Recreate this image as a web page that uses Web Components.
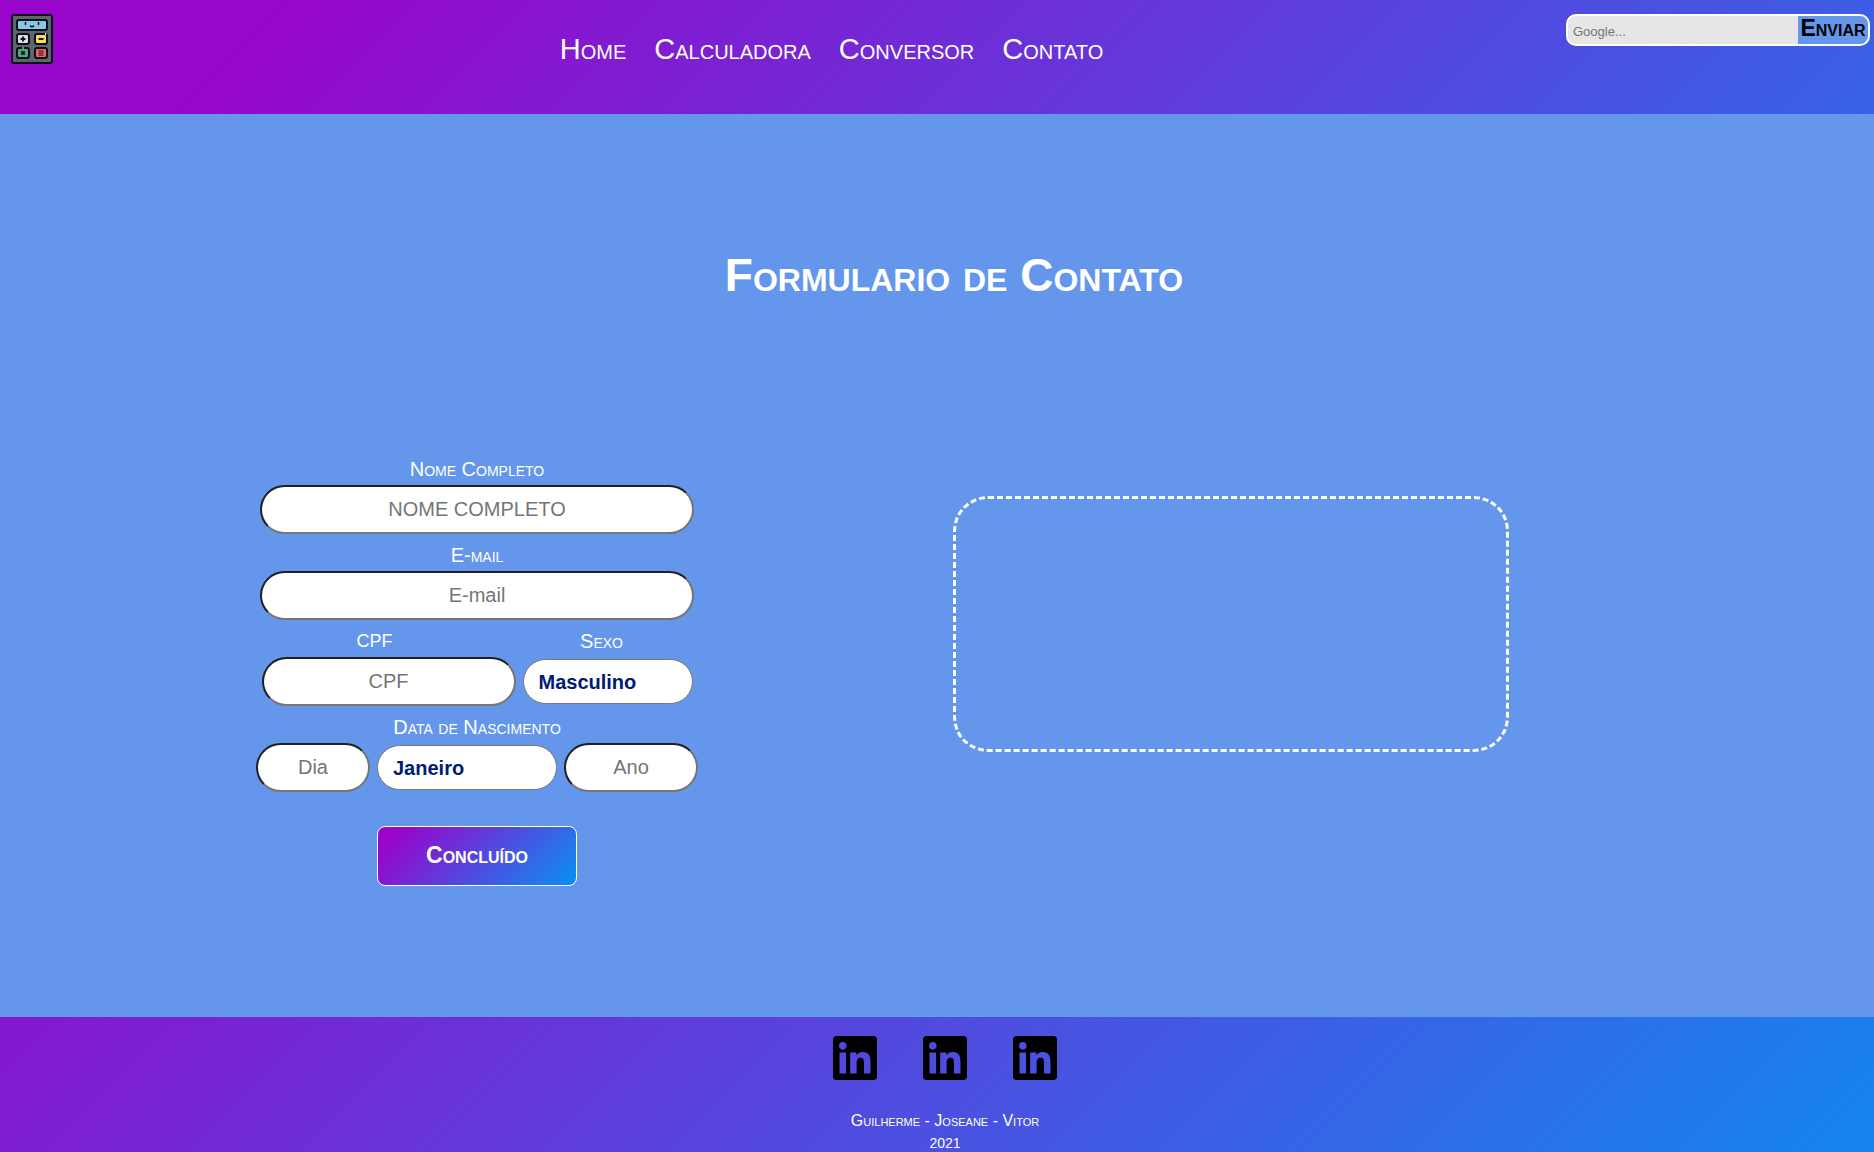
<!DOCTYPE html>
<html lang="pt-br">
<head>
<meta charset="utf-8">
<title>Formulario de Contato</title>
<style>
*{box-sizing:border-box}
body{margin:0;font-family:"Liberation Sans",Arial,sans-serif;font-variant:small-caps;color:#fff;background:#6497ec;--violet:#9805cb;--blue:#0891f3}
</style>
</head>
<body>
<contact-page></contact-page>
<script>
const define = (name, html) => customElements.define(name, class extends HTMLElement {
  constructor() {
    super();
    const root = this.attachShadow({ mode: 'open' });
    root.innerHTML = '<style>*{box-sizing:border-box}</style>' + html(this);
  }
});

define('calc-logo', () => `
<style>:host{display:block;width:42px;height:50px}svg{display:block;width:100%;height:100%}</style>
<svg viewBox="0 0 42 50" role="img" aria-label="Calculadora">
<rect x="1" y="1" width="40" height="48" rx="2" fill="#596773" stroke="#101014" stroke-width="2"/>
<g stroke="#101014" stroke-width="2">
<rect x="6" y="6" width="30" height="10" rx="2" fill="#80cbea"/>
<rect x="6" y="20" width="12" height="10" rx="2" fill="#dcdce0"/>
<rect x="24" y="20" width="12" height="10" rx="2" fill="#fbdc55"/>
<rect x="6" y="34" width="12" height="10" rx="2" fill="#48ad7c"/>
<rect x="24" y="34" width="12" height="10" rx="2" fill="#f2646b"/>
</g>
<g fill="none" stroke="#101014" stroke-width="1.800">
<path d="M12 22.500v5M9.500 25h5M27.500 25h5M10.300 37.300l3.400 3.400M13.700 37.300l-3.400 3.400"/>
<path d="M27.500 37h5M27.500 39h5M27.500 41h5" stroke-width="1.200"/>
<path d="M14.500 8v3M27.500 8v3M19 11.500q2 2.500 4 0" stroke-width="1.500"/>
</g>
<path d="M12.500 12h3M26 12h3" stroke="#e794ad" stroke-width="1.800"/>
<path d="M34.500 19v2M12 33v2" stroke="#fff3b0" stroke-width="1"/>
</svg>`);

define('site-search', () => `
<style>
:host{display:block;width:304px}
form{display:flex;height:32px;border:2px solid #fff;border-radius:10px;overflow:hidden;background:#e6e6e6}
input{flex:1;min-width:0;border:0;outline:0;padding:2px 5px 0;background:#e6e6e6;font:13px "Liberation Sans",Arial,sans-serif}
input::placeholder{color:#757575}
button{width:70px;border:0;padding:0 0 4px;background:#6497ec;color:#000;font:bold small-caps 23px/24px "Liberation Sans",Arial,sans-serif;white-space:nowrap}
</style>
<form><input type="search" aria-label="Pesquisar" placeholder="Google..."><button type="button">Enviar</button></form>`);

define('site-header', () => `
<style>
:host{display:flex;justify-content:space-between;height:114px;padding:14px 4px 0 11px;background:linear-gradient(135deg,var(--violet) 14%,var(--blue) 142%)}
nav{display:flex;gap:28px;padding:20px 0 0 44px;font-size:29px;line-height:30px}
a{color:inherit;text-decoration:none}
</style>
<calc-logo></calc-logo>
<nav><a href="#">Home</a><a href="#">Calculadora</a><a href="#">Conversor</a><a href="#">Contato</a></nav>
<site-search></site-search>`);

define('form-field', el => {
  const label = el.getAttribute('label'), hint = el.getAttribute('hint'), option = el.getAttribute('option');
  const aria = label ? '' : `aria-label="${el.getAttribute('name')}"`;
  return `
<style>
:host{display:flex;flex-direction:column;align-items:center}
label{font-size:20px;line-height:20px;padding:0 var(--label-end,0) 6px 0}
:host([acronym]) label{font-size:18px}
.box{display:flex;align-items:center;width:100%;height:49px}
input,select{width:100%;font:20px "Liberation Sans",Arial,sans-serif;background:#fff;border-radius:25px;margin:0}
input{height:49px;border:2px solid;border-color:#202020 #767676 #767676 #202020;padding:0 10px;text-align:center}
input::placeholder{color:#757575}
select{appearance:none;height:45px;border:1px solid #767676;padding:0 15px;color:#001c72;font-weight:bold}
</style>
${label ? `<label for="control">${label}</label>` : ''}
<div class="box">${option ? `<select id="control" ${aria}><option>${option}</option></select>` : `<input id="control" ${aria} placeholder="${hint}">`}</div>`;
});

define('contact-form', () => `
<style>
:host{display:block;width:442px}
form{display:flex;flex-direction:column;align-items:center;gap:11px}
.full{width:434px}
.row{display:flex;justify-content:center;gap:7px}
.cpf{width:254px;--label-end:28px}.sexo{width:170px;--label-end:12px}
fieldset{border:0;margin:0;padding:0;min-width:0}
legend{padding:0 0 6px;margin:0 auto;font-size:20px;line-height:20px}
.dia{width:114px}.mes{width:180px}.ano{width:134px}
button{width:200px;height:60px;margin-top:23px;padding:0 0 2px;border:1px solid #fff;border-radius:8px;color:#fff;background:linear-gradient(135deg,var(--violet) 10%,var(--blue) 100%);font:bold small-caps 23px "Liberation Sans",Arial,sans-serif}
</style>
<form>
<form-field class="full" label="Nome Completo" hint="NOME COMPLETO"></form-field>
<form-field class="full" label="E-mail" hint="E-mail"></form-field>
<div class="row"><form-field class="cpf" acronym label="CPF" hint="CPF"></form-field><form-field class="sexo" label="Sexo" option="Masculino"></form-field></div>
<fieldset><legend>Data de Nascimento</legend><div class="row"><form-field class="dia" name="Dia" hint="Dia"></form-field><form-field class="mes" name="Mês" option="Janeiro"></form-field><form-field class="ano" name="Ano" hint="Ano"></form-field></div></fieldset>
<button type="button">Concluído</button>
</form>`);

define('message-panel', () => `
<style>:host{display:block;width:556px;height:256px;border:3px dashed #fff;border-radius:35px}</style><slot></slot>`);

define('linkedin-link', el => `
<style>:host{display:block}a{display:block}svg{display:block;width:44px;height:44px}</style>
<a href="#" aria-label="LinkedIn de ${el.getAttribute('person')}"><svg viewBox="0 0 24 24"><path d="M20.447 20.452h-3.554v-5.569c0-1.328-.027-3.037-1.852-3.037-1.853 0-2.136 1.445-2.136 2.939v5.667H9.351V9h3.414v1.561h.046c.477-.9 1.637-1.850 3.370-1.850 3.601 0 4.267 2.370 4.267 5.455v6.286zM5.337 7.433a2.062 2.062 0 0 1-2.063-2.065 2.064 2.064 0 1 1 2.063 2.065zm1.782 13.019H3.555V9h3.564v11.452zM22.225 0H1.771C.792 0 0 .774 0 1.729v20.542C0 23.227.792 24 1.771 24h20.451C23.200 24 24 23.227 24 22.271V1.729C24 .774 23.200 0 22.222 0h.003z"/></svg></a>`);

define('site-footer', () => `
<style>
:host{display:flex;flex-direction:column;align-items:center;height:135px;padding:19px 0 0 16px;font-size:14px;line-height:23px;text-align:center;background:linear-gradient(135deg,var(--violet) -16%,var(--blue) 111%)}
.links{display:flex;gap:46px;margin-bottom:29px}
p{margin:0}
.team{font-size:16px}
</style>
<div class="links"><linkedin-link person="Guilherme"></linkedin-link><linkedin-link person="Joseane"></linkedin-link><linkedin-link person="Vitor"></linkedin-link></div>
<p class="team">Guilherme - Joseane - Vitor</p><p>2021</p>`);

define('contact-page', () => `
<style>
:host{display:flex;flex-direction:column;min-height:100vh}
main{flex:1;padding-top:134px}
h1{margin:0 0 157px;padding-left:34px;text-align:center;font-size:46px;line-height:54px}
.cols{display:flex;align-items:flex-start;justify-content:space-between;padding:0 365px 0 256px}
@media (max-width:1700px){.cols{padding:0 5%}}
message-panel{margin-top:37px}
</style>
<site-header></site-header>
<main><h1>Formulario de Contato</h1><div class="cols"><contact-form></contact-form><message-panel></message-panel></div></main>
<site-footer></site-footer>`);
</script>
</body>
</html>
